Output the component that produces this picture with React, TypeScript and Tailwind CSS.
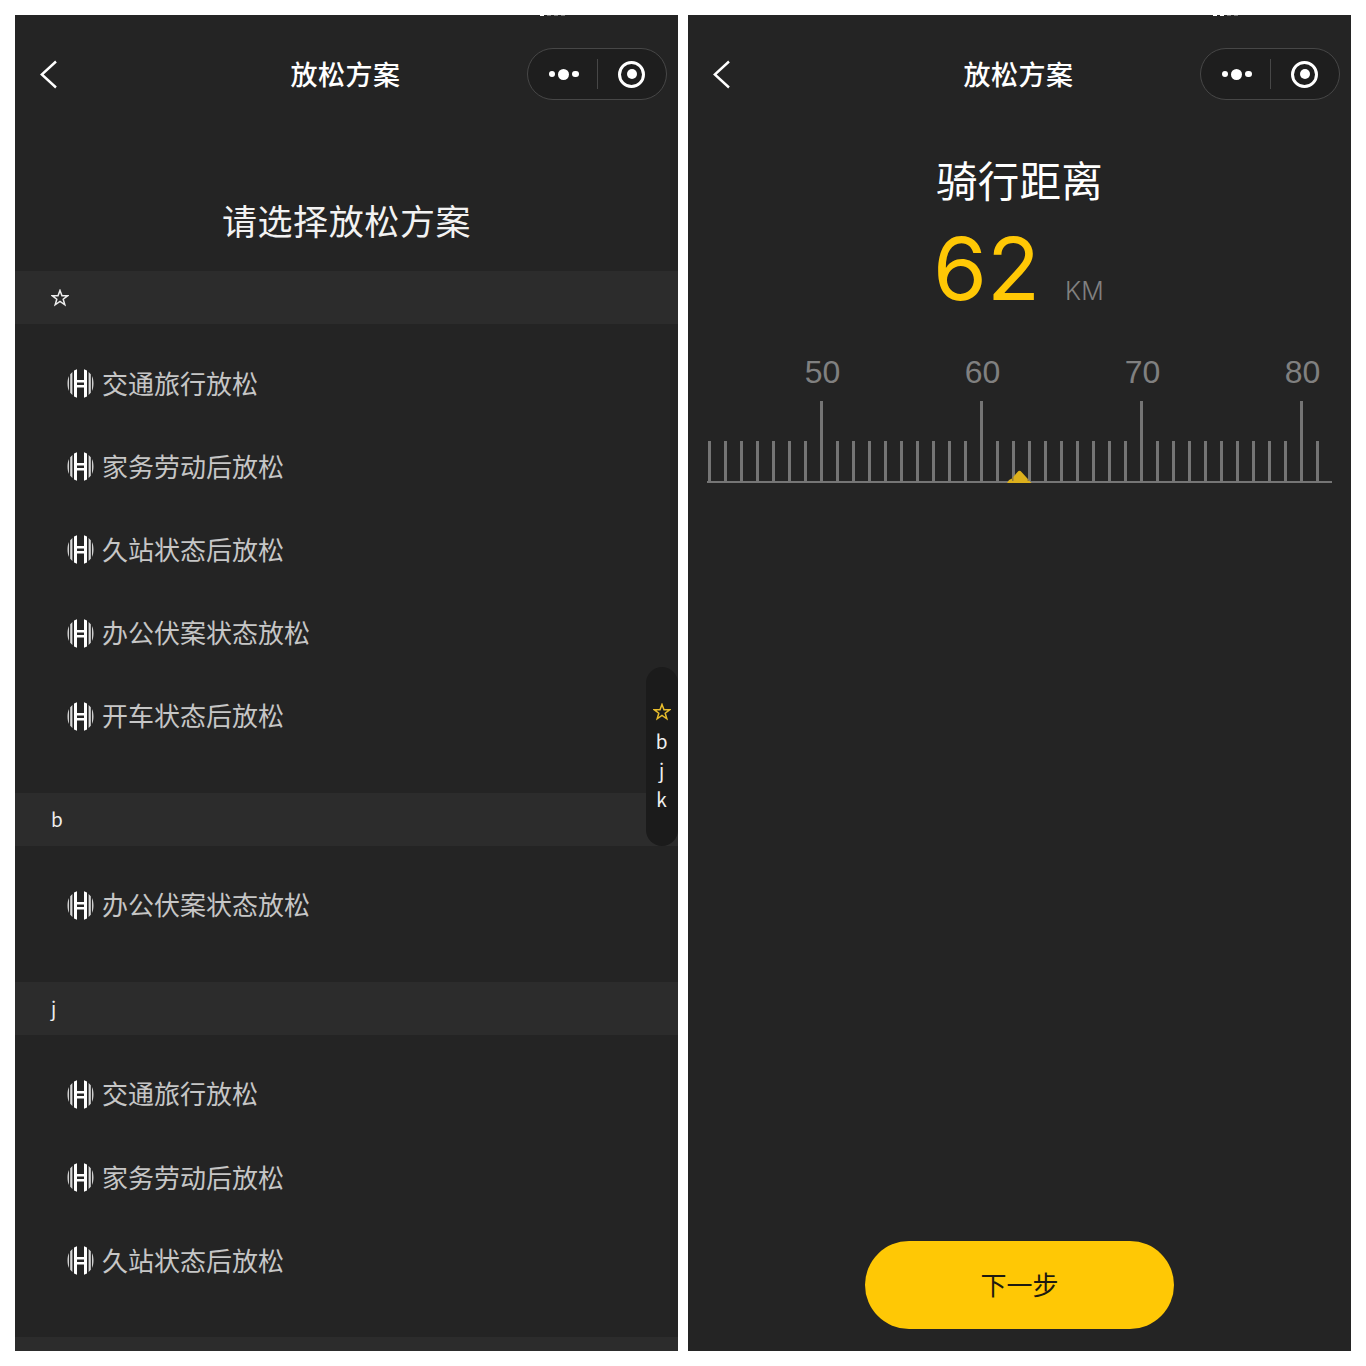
import React from 'react';

interface Section {
  key: string;
  items: string[];
}

const SECTIONS: Section[] = [
  {
    key: '☆',
    items: ['交通旅行放松', '家务劳动后放松', '久站状态后放松', '办公伏案状态放松', '开车状态后放松'],
  },
  { key: 'b', items: ['办公伏案状态放松'] },
  { key: 'j', items: ['交通旅行放松', '家务劳动后放松', '久站状态后放松'] },
];

const RULER_START = 43;
const RULER_END = 81;

const StarIcon = ({ className }: { className?: string }) => (
  <svg width="18" height="18" viewBox="0 0 18 18" fill="none" stroke="currentColor" strokeWidth="1.5" className={className}>
    <path d="M9 1.4 11 6.8H16.6L12.2 10.2 13.8 15.8 9 12.5 4.2 15.8 5.8 10.2 1.4 6.8H7Z" />
  </svg>
);

const BrandIcon = () => (
  <svg width="27" height="29" viewBox="0 0 27 29" className="shrink-0">
    <path d="M2 7V22C.9 19.8.5 17.2.5 14.5S.9 9.2 2 7ZM25 7V22C26.1 19.8 26.500 17.2 26.500 14.5S26.1 9.2 25 7Z" fill="#d0d0d0" />
    <path d="M3.2 5.2 5.4 3V26L3.2 23.8ZM23.8 5.2 21.6 3V26L23.8 23.8Z" fill="#d6d6d6" />
    <path d="M7 1.4 10 .2V28.800L7 27.6ZM20 1.4 17 .2V28.800L20 27.6Z" fill="#fff" />
    <path d="M9.500 11H17.500V13.400H9.500ZM9.500 16H17.500V18.400H9.500Z" fill="#fff" />
  </svg>
);

const NavBar = () => (
  <header className="h-[118px] shrink-0 grid grid-cols-[140px_1fr_140px] items-center pl-[14px] pr-[11px]">
    <svg width="36" height="36" viewBox="0 0 36 36" fill="none" stroke="#fff" strokeWidth="2.4">
      <path d="M27 5.500 12.800 18.500 27 31.500" />
    </svg>
    <h1 className="pr-[5px] pb-px text-center text-[27px] font-medium text-white leading-none tracking-[0.5px]">
      放松方案
    </h1>
    <div className="w-[140px] h-[52px] rounded-full border border-[#474747] bg-[#1e1e1e] flex items-center">
      <div className="w-[69px] flex items-center justify-center gap-[3px] pl-[2px]">
        <span className="size-[6.5px] rounded-full bg-white" />
        <span className="size-[11px] rounded-full bg-white" />
        <span className="size-[6.5px] rounded-full bg-white" />
      </div>
      <span className="w-px h-[30px] bg-[#474747]" />
      <div className="flex-1 flex items-center justify-center pr-px">
        <span className="size-[27px] rounded-full border-[3.5px] border-white flex items-center justify-center">
          <span className="size-[10px] rounded-full bg-white" />
        </span>
      </div>
    </div>
  </header>
);

const PlanList = () => (
  <section className="relative w-[663px] h-[1336px] bg-[#242424] overflow-hidden flex flex-col">
    <NavBar />
    <h2 className="h-[138px] shrink-0 pt-[61px] text-center text-[35px] leading-[52px] tracking-[0.6px] text-[#f2f2f2]">
      请选择放松方案
    </h2>

    {SECTIONS.map((section) => (
      <div key={section.key} className="shrink-0">
        <div className="h-[53px] bg-[#2c2c2c] pl-9 flex items-center text-[19px] text-[#eeeeee]">
          {section.key === '☆' ? <StarIcon /> : section.key}
        </div>
        <ul className="pt-[18px] pb-[34.8px]">
          {section.items.map((item) => (
            <li key={item} className="h-[83.2px] pl-[52px] flex items-center gap-2 text-[26px] text-[#c6c6c6]">
              <BrandIcon />
              <span className="pb-[3px]">{item}</span>
            </li>
          ))}
        </ul>
      </div>
    ))}
    <div className="h-[53px] shrink-0 bg-[#2c2c2c]" />

    {/* letter index over the list */}
    <nav className="absolute right-0 top-[652px] w-8 h-[179px] rounded-2xl bg-[#1b1b1b] flex flex-col items-center justify-center pb-[3px] pr-px text-[19px] leading-[29px] text-[#f0f0f0]">
      <span className="h-[29px] pt-px flex items-center">
        <StarIcon className="text-[#e8bd2c]" />
      </span>
      <span>b</span>
      <span>j</span>
      <span>k</span>
    </nav>

    {/* bottom edge of the status bar text */}
    <div className="absolute left-[525px] top-0 flex gap-[3px]">
      <span className="w-1 h-px bg-white" />
      <span className="w-1 h-px bg-[#777777]" />
      <span className="w-1 h-px bg-[#777777]" />
      <span className="w-1 h-px bg-[#777777]" />
    </div>
  </section>
);

const Ruler = () => {
  const ticks = Array.from({ length: RULER_END - RULER_START + 1 }, (_, i) => RULER_START + i);

  return (
    <div className="relative ml-[19px] w-[625px] h-[130px] border-b-2 border-[#757575] flex items-end">
      <div className="-ml-[6px] flex items-end">
        {ticks.map((value) =>
          value % 10 === 0 ? (
            <div key={value} className="w-4 shrink-0 flex flex-col items-center">
              <span className="font-['Liberation_Sans',sans-serif] text-[32px] leading-8 text-[#808080] pl-[3px] mb-[13px]">
                {value}
              </span>
              <span className="w-[3px] h-20 bg-[#757575]" />
            </div>
          ) : (
            <div key={value} className="w-4 shrink-0 flex justify-center">
              <span className="w-[3px] h-10 bg-[#757575]" />
            </div>
          ),
        )}
      </div>
      <svg width="26" height="14" viewBox="0 0 26 14" className="absolute left-[299px] -bottom-[2px]">
        <path d="M1 14 3 11 6 9.500 11.500 3Q13.500 .4 15.500 3L25.500 14Z" fill="#dcb01c" />
        <path d="M6 9.500V12H7.500V7.700ZM21.500 9.800V12H23V11.300Z" fill="#8f7b3c" />
      </svg>
    </div>
  );
};

const DistancePicker = () => (
  <section className="relative w-[663px] h-[1336px] bg-[#242424] overflow-hidden flex flex-col">
    <NavBar />
    <h2 className="pt-[16px] text-center text-[41.5px] leading-[60px] tracking-[0.3px] text-white">骑行距离</h2>
    <div className="mt-[11px] pl-[245px] h-[98px] flex items-baseline font-['Inter',sans-serif]">
      <span className="text-[87px] leading-[98px] text-[#ffc805]">62</span>
      <span className="ml-[25px] text-[25px] font-light text-[#808080]">KM</span>
    </div>
    <div className="mt-[35px]">
      <Ruler />
    </div>
    <button className="mt-auto mb-[22px] mx-auto w-[309px] h-[88px] pb-[3px] rounded-full bg-[#ffc805] text-[26px] text-[#1d1a10]">
      下一步
    </button>

    <div className="absolute left-[525px] top-0 flex gap-[3px]">
      <span className="w-1 h-px bg-white" />
      <span className="w-1 h-px bg-white" />
      <span className="w-1 h-px bg-[#777777]" />
      <span className="w-1 h-px bg-[#777777]" />
    </div>
  </section>
);

export default function App() {
  return (
    <main className="w-[1366px] h-[1366px] bg-white p-[15px] flex gap-[10px] overflow-hidden font-['Noto_Sans_CJK_SC',sans-serif]">
      <PlanList />
      <DistancePicker />
    </main>
  );
}
